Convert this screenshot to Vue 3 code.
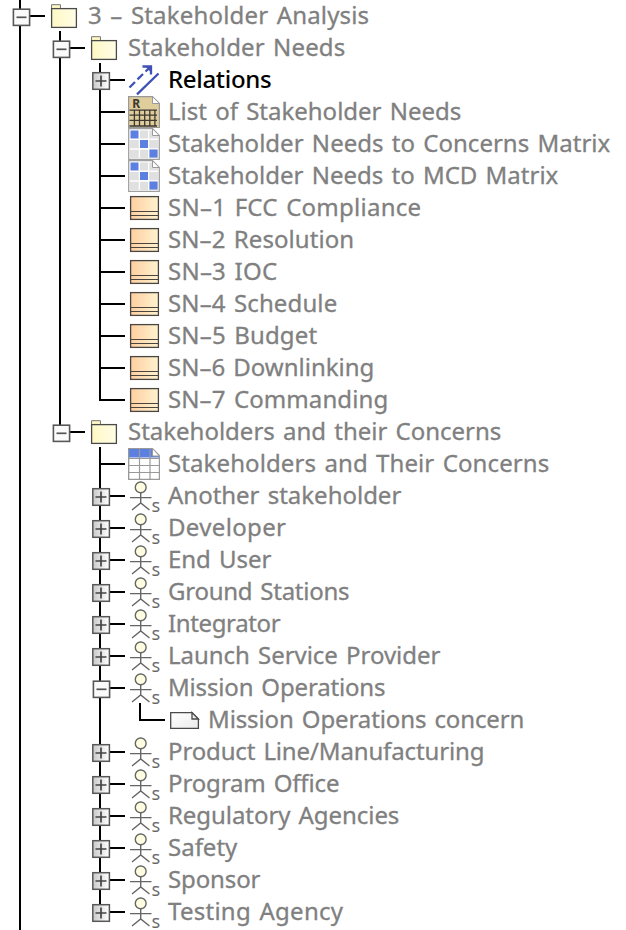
<script setup>
import { ref, onMounted } from 'vue'

// [level, toggle, icon, label, right edge of the label, levels whose line runs on, first child]
const rows = [
  [0, 'minus', 'folder', '3 – Stakeholder Analysis', 369, [0]],
  [1, 'minus', 'folder', 'Stakeholder Needs', 345, [0, 1], true],
  [2, 'plus', 'relation', 'Relations', 271, [0, 1, 2], true],
  [2, '', 'list', 'List of Stakeholder Needs', 461, [0, 1, 2]],
  [2, '', 'matrix', 'Stakeholder Needs to Concerns Matrix', 610, [0, 1, 2]],
  [2, '', 'matrix', 'Stakeholder Needs to MCD Matrix', 558, [0, 1, 2]],
  [2, '', 'need', 'SN–1 FCC Compliance', 421, [0, 1, 2]],
  [2, '', 'need', 'SN–2 Resolution', 354, [0, 1, 2]],
  [2, '', 'need', 'SN–3 IOC', 277, [0, 1, 2]],
  [2, '', 'need', 'SN–4 Schedule', 337, [0, 1, 2]],
  [2, '', 'need', 'SN–5 Budget', 317, [0, 1, 2]],
  [2, '', 'need', 'SN–6 Downlinking', 374, [0, 1, 2]],
  [2, '', 'need', 'SN–7 Commanding', 388, [0, 1]],
  [1, 'minus', 'folder', 'Stakeholders and their Concerns', 501, [0]],
  [2, '', 'table', 'Stakeholders and Their Concerns', 549, [0, 2], true],
  [2, 'plus', 'actor', 'Another stakeholder', 401, [0, 2]],
  [2, 'plus', 'actor', 'Developer', 286, [0, 2]],
  [2, 'plus', 'actor', 'End User', 271, [0, 2]],
  [2, 'plus', 'actor', 'Ground Stations', 349, [0, 2]],
  [2, 'plus', 'actor', 'Integrator', 280, [0, 2]],
  [2, 'plus', 'actor', 'Launch Service Provider', 440, [0, 2]],
  [2, 'minus', 'actor', 'Mission Operations', 385, [0, 2]],
  [3, '', 'note', 'Mission Operations concern', 524, [0, 2], true],
  [2, 'plus', 'actor', 'Product Line/Manufacturing', 484, [0, 2]],
  [2, 'plus', 'actor', 'Program Office', 339, [0, 2]],
  [2, 'plus', 'actor', 'Regulatory Agencies', 399, [0, 2]],
  [2, 'plus', 'actor', 'Safety', 237, [0, 2]],
  [2, 'plus', 'actor', 'Sponsor', 260, [0, 2]],
  [2, 'plus', 'actor', 'Testing Agency', 343, [0]],
].map(([level, toggle, icon, label, end, lines, first]) => ({
  level, toggle, icon, label, end, lines, first: !!first, spacing: 0,
}))

const items = ref(rows)
const labels = ref([])

onMounted(() => {
  labels.value.forEach((el, i) => {
    const box = el.getBoundingClientRect()
    const item = items.value[i]
    item.spacing = (item.end + 0.3 - box.left - box.width) / item.label.length
  })
})
</script>

<template>
  <main class="tree">
    <svg class="defs" width="0" height="0" aria-hidden="true">
      <defs>
        <linearGradient id="gFolder"><stop offset="0" stop-color="#fff8c4" /><stop offset="1" stop-color="#fffde6" /></linearGradient>
        <linearGradient id="gNeed"><stop offset="0" stop-color="#ffcfa0" /><stop offset="1" stop-color="#fff3cf" /></linearGradient>
        <linearGradient id="gPlus"><stop offset="0" stop-color="#c9c9c9" /><stop offset="1" stop-color="#ffffff" /></linearGradient>
        <linearGradient id="gNote" x2="1" y2="1"><stop offset="0" stop-color="#ffffff" /><stop offset="1" stop-color="#ececec" /></linearGradient>
      </defs>
    </svg>
    <div v-for="(item, i) in items" :key="i" class="row">
      <svg v-for="n in item.level + 1" :key="n" class="guide" viewBox="0 0 40 32">
        <template v-if="n - 1 < item.level">
          <path v-if="item.lines.includes(n - 1)" class="line" d="M20 0V34" />
        </template>
        <template v-else>
          <path class="line" :d="`M20 ${item.first ? -1 : 0}V${item.lines.includes(item.level) ? 32 : 17}`" />
          <path class="line" :d="item.toggle ? 'M28 16H45' : 'M20 16H45'" />
          <g v-if="item.toggle === 'minus'">
            <rect x="13.4" y="9.2" width="16.2" height="16.2" fill="#fafafa" stroke="#585858" stroke-width="1.6" />
            <path d="M16.5 17.3H26.5" stroke="#555" stroke-width="1.7" />
          </g>
          <g v-if="item.toggle === 'plus'">
            <rect x="12.8" y="8.7" width="16.6" height="16.6" fill="url(#gPlus)" stroke="#585858" stroke-width="1.5" />
            <path d="M15.5 17H26.5M21 11.5V22.5" stroke="#444" stroke-width="1.7" />
          </g>
        </template>
      </svg>
      <svg class="icon" viewBox="0 0 48 32" fill="none">
        <g v-if="item.icon === 'folder'">
          <path d="M11.5 8.5V4.7H20.5V8.5" fill="#fff8c4" stroke="#777" />
          <rect x="11.6" y="8.6" width="24.8" height="18.8" fill="url(#gFolder)" stroke="#4a4a4a" stroke-width="1.3" />
        </g>
        <g v-else-if="item.icon === 'relation'" stroke="#3f51b5" stroke-width="2.3">
          <path d="M9.5 23.5L15 18M17.5 15.3L23 10M25.5 7.5L31 2.3M17 30.3L38.5 9.5" />
          <path d="M22.5 2.5H31V10.5" />
          <path d="M25 2L31.5 2V9Z" fill="#3f51b5" stroke="none" />
        </g>
        <g v-else-if="item.icon === 'list'">
          <path d="M8.6 .6H32.5L39.4 7.5V31.5H8.6Z" fill="#dfcd9c" stroke="#999" stroke-width="1.2" />
          <path d="M32.5 .6V7.5H39.4Z" fill="#fff" stroke="#999" />
          <path d="M9.5 14.2H37M9.5 19.2H37M9.5 24.4H37M9.5 30H37M14.4 13.5V30.5M19.5 13.5V30.5M24.7 13.5V30.5M29.8 13.5V30.5M34.9 13.5V30.5" stroke="#3c3830" stroke-width="1.3" />
          <text x="12.2" y="12.2" class="r">R</text>
        </g>
        <g v-else-if="item.icon === 'matrix'">
          <path d="M8.7 .7H32.5L39.3 7.5V31.3H8.7Z" fill="#fff" stroke="#a0a0a0" stroke-width="1.3" />
          <path d="M20 2.5H28V10.5H20ZM10 12H18.8V20.3H10ZM29.2 12H38V20.3H29.2ZM10 21.7H18.8V30H10ZM20 21.7H28V30H20ZM29.2 2.5H32V8H38V10.5H29.2ZM29.2 21.7H38V30H29.2Z" fill="#e0e0e0" />
          <path d="M10.5 2.5H18.5V10.5H10.5ZM20 12H28V20H20ZM29.5 21.5H37.5V29.5H29.5Z" fill="#5b80e2" />
          <path d="M32.5 .7V7.5H39.3Z" fill="#fff" stroke="#999" />
        </g>
        <g v-else-if="item.icon === 'need'">
          <rect x="10.6" y="4.6" width="27.8" height="22.8" fill="url(#gNeed)" stroke="#4a4540" stroke-width="1.3" />
          <path d="M10.6 19.5H38.4M10.6 23.5H38.4" stroke="#4a4540" stroke-width="1.2" />
        </g>
        <g v-else-if="item.icon === 'table'">
          <path d="M8.6 .6H32.5L39.4 7.5V31.4H8.6Z" fill="#fff" stroke="#999" stroke-width="1.2" />
          <path d="M9 1H32.5V8H39V9.5H9Z" fill="#5b80e2" />
          <path d="M8.6 10.5H39.4M8.6 17.5H39.4M8.6 24.5H39.4M19.5 .6V31.4M30 .6V31.4M8.6 .6V31.4" stroke="#999" stroke-width="1.2" />
          <path d="M32.5 .6V8H39.4Z" fill="#fff" stroke="#999" />
        </g>
        <g v-else-if="item.icon === 'actor'" stroke="#666" stroke-width="1.4">
          <circle cx="20.7" cy="7.4" r="5.4" fill="#fffde0" />
          <path d="M20.7 13V23.3M10 17.6H31.5M12 30L20.7 23L29.5 30" />
          <text x="31.8" y="31.5" class="s">S</text>
        </g>
        <g v-else>
          <path d="M10.7 8.6H32L38.4 15V24.4H10.7Z" fill="url(#gNote)" stroke="#4a4a4a" stroke-width="1.3" />
          <path d="M32 8.6V15H38.4Z" fill="#eee" stroke="#4a4a4a" stroke-width="1.3" />
        </g>
      </svg>
      <span
        ref="labels"
        class="label"
        :class="{ strong: item.icon === 'relation' }"
        :style="{ letterSpacing: item.spacing + 'px' }"
      >{{ item.label }}</span>
    </div>
  </main>
</template>

<style>
body {
  background: #fff;
  overflow: hidden;
}
</style>

<style scoped>
.tree {
  width: 626px;
  height: 930px;
  overflow: hidden;
  background: #fff;
  font-family: "Noto Sans", "Open Sans", sans-serif;
}
.defs {
  display: block;
}
.row {
  display: flex;
  height: 32px;
}
.guide {
  flex: none;
  width: 40px;
  height: 32px;
  overflow: visible;
}
.line {
  stroke: #000;
  stroke-width: 2;
}
.row:last-child {
  height: 34px;
}
.icon {
  flex: none;
  width: 48px;
  height: 32px;
  overflow: visible;
}
.label {
  flex: none;
  font-size: 24px;
  line-height: 30px;
  word-spacing: 2px;
  white-space: pre;
  color: #808080;
  -webkit-text-stroke: 0.3px #808080;
}
.strong {
  color: #000;
  font-weight: 500;
  -webkit-text-stroke: 0;
}
.r {
  font: bold 12px "Noto Sans", sans-serif;
  fill: #3c3830;
}
.s {
  font: 15px "Noto Sans", sans-serif;
  fill: #666;
  stroke: #666;
  stroke-width: 0.2;
}
</style>
